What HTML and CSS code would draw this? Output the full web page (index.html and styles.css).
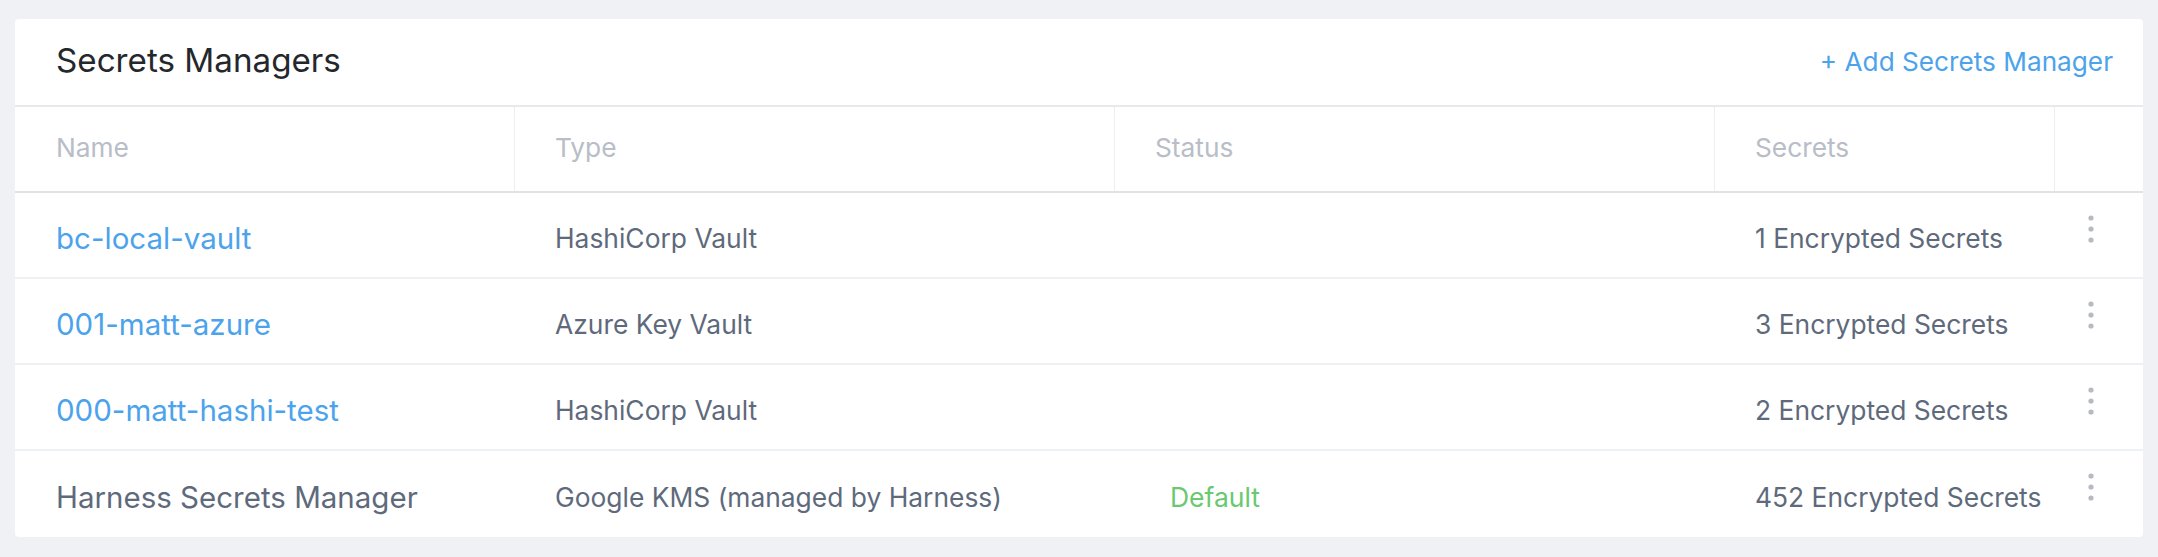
FILE: index.html
```html
<!DOCTYPE html>
<html>
<head>
<meta charset="utf-8">
<title>Secrets Managers</title>
<link rel="stylesheet" href="styles.css">
</head>
<body>
<div class="card">
  <div class="card-header">
    <h1 class="title">Secrets Managers</h1>
    <a class="add-link" href="#">+ Add Secrets Manager</a>
  </div>
  <div class="table">
    <div class="row head">
      <div class="cell">Name</div>
      <div class="cell">Type</div>
      <div class="cell">Status</div>
      <div class="cell">Secrets</div>
      <div class="cell"></div>
    </div>
    <div class="row">
      <div class="cell"><a class="name-link" href="#">bc-local-vault</a></div>
      <div class="cell">HashiCorp Vault</div>
      <div class="cell"></div>
      <div class="cell">1 Encrypted Secrets</div>
      <div class="cell actions"><svg class="kebab" width="6" height="28" viewBox="0 0 6 28"><circle cx="3" cy="3" r="2.6"/><circle cx="3" cy="14" r="2.6"/><circle cx="3" cy="25" r="2.6"/></svg></div>
    </div>
    <div class="row">
      <div class="cell"><a class="name-link" href="#">001-matt-azure</a></div>
      <div class="cell">Azure Key Vault</div>
      <div class="cell"></div>
      <div class="cell">3 Encrypted Secrets</div>
      <div class="cell actions"><svg class="kebab" width="6" height="28" viewBox="0 0 6 28"><circle cx="3" cy="3" r="2.6"/><circle cx="3" cy="14" r="2.6"/><circle cx="3" cy="25" r="2.6"/></svg></div>
    </div>
    <div class="row">
      <div class="cell"><a class="name-link" href="#">000-matt-hashi-test</a></div>
      <div class="cell">HashiCorp Vault</div>
      <div class="cell"></div>
      <div class="cell">2 Encrypted Secrets</div>
      <div class="cell actions"><svg class="kebab" width="6" height="28" viewBox="0 0 6 28"><circle cx="3" cy="3" r="2.6"/><circle cx="3" cy="14" r="2.6"/><circle cx="3" cy="25" r="2.6"/></svg></div>
    </div>
    <div class="row last">
      <div class="cell"><span class="name-plain">Harness Secrets Manager</span></div>
      <div class="cell">Google KMS (managed by Harness)</div>
      <div class="cell"><span class="status-default">Default</span></div>
      <div class="cell">452 Encrypted Secrets</div>
      <div class="cell actions"><svg class="kebab" width="6" height="28" viewBox="0 0 6 28"><circle cx="3" cy="3" r="2.6"/><circle cx="3" cy="14" r="2.6"/><circle cx="3" cy="25" r="2.6"/></svg></div>
    </div>
  </div>
</div>
</body>
</html>
```
FILE: styles.css
```css
* { box-sizing: border-box; }

html, body {
  margin: 0;
  padding: 0;
  background: #eff1f4;
  font-family: "Inter", "Lato", "Noto Sans", sans-serif;
}

body {
  padding: 19px 15px 20px 15px;
}

.card {
  background: #ffffff;
  border-radius: 4px;
  overflow: hidden;
}

.card-header {
  height: 88px;
  display: flex;
  align-items: center;
  justify-content: space-between;
  padding: 0 30px 0 41px;
  border-bottom: 2px solid #e7e9ec;
}

.title {
  margin: 0 0 4px 0;
  font-size: 33.2px;
  font-weight: 400;
  line-height: 40px;
  color: #24272c;
}

.add-link {
  font-size: 26.2px;
  line-height: 32px;
  color: #4ca3ec;
  text-decoration: none;
}

.row {
  display: grid;
  grid-template-columns: 499px 600px 600px 340px 1fr;
  height: 86px;
  border-bottom: 2px solid #eef1f4;
}

.row.last {
  border-bottom: none;
}

.cell {
  display: flex;
  align-items: center;
  padding: 6px 0 0 41px;
  font-size: 26.4px;
  color: #5e6a7c;
  white-space: nowrap;
}

.row.head {
  border-bottom: 2px solid #dfe2e6;
}

.row.head .cell {
  padding: 0 0 3px 41px;
  color: #b8bdc7;
  font-size: 26.3px;
}

.row.head .cell + .cell {
  border-left: 1px solid #eceef1;
  padding-left: 40px;
}

.name-link {
  font-size: 29.5px;
  color: #4ca3ec;
  text-decoration: none;
}

.name-plain {
  font-size: 29.5px;
  color: #5e6a7c;
}

.status-default {
  margin-left: 15px;
  font-size: 26.5px;
  color: #68c970;
}

.cell.actions {
  align-items: flex-start;
  padding: 22px 0 0 34px;
}

.kebab {
  fill: #b5bac3;
  display: block;
}
```
